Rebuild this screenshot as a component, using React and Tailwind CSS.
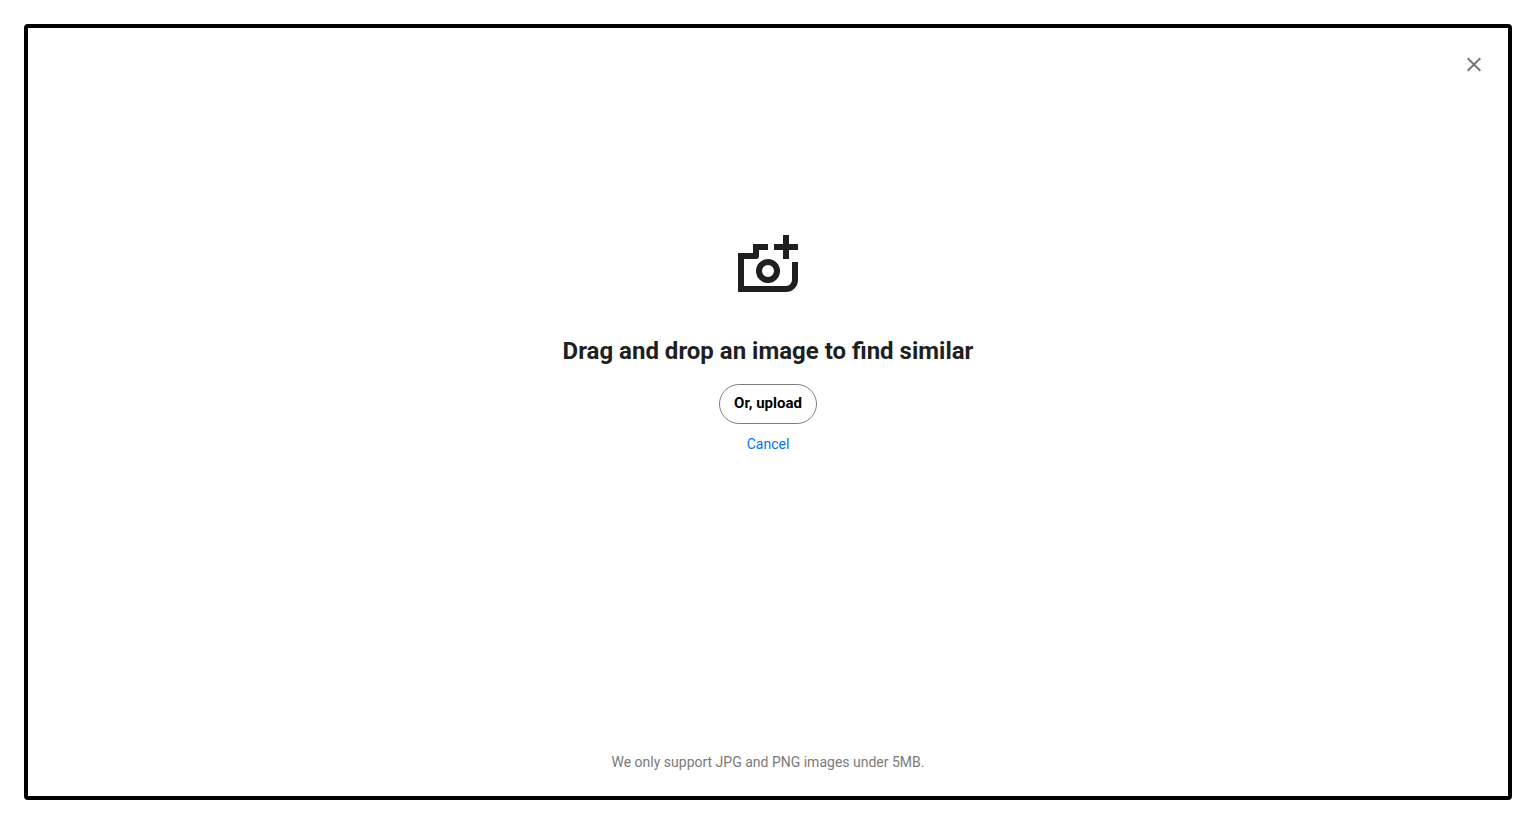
import React from 'react';

function CloseIcon() {
    return (
        <svg className="size-6" viewBox="0 0 24 24" fill="currentColor" aria-hidden="true">
            <path d="M19 6.91 17.59 5.5 12 11.09 6.41 5.5 5 6.91 10.59 12.5 5 18.09 6.41 19.5 12 13.91 17.59 19.5 19 18.09 13.41 12.5z" />
        </svg>
    );
}

function CameraPlusIcon() {
    return (
        <svg width="60" height="57" viewBox="0 0 60 57" fill="currentColor" aria-hidden="true">
            <path d="M0 18H15V9H30V15H21V21a3 3 0 0 1-3 3H6V51H48a6 6 0 0 0 6-6V27h6V45a12 12 0 0 1-12 12H0z" />
            <path d="M45 0h6v9h9v6h-9v9h-6v-9h-9V9h9z" />
            <circle cx="30" cy="36" r="9" fill="none" stroke="currentColor" strokeWidth="6" />
        </svg>
    );
}

export default function App() {
    return (
        <div className="flex min-h-screen bg-white p-6 font-['Roboto',sans-serif]">
            <div className="flex flex-1 flex-col rounded border-4 border-black">
                <header className="flex justify-end pt-6 pr-[22px]">
                    <button type="button" aria-label="Close" className="text-[#757575] cursor-pointer">
                        <CloseIcon />
                    </button>
                </header>

                <main className="flex flex-1 flex-col items-center justify-center pb-[139px] text-[#1f1f1f]">
                    <CameraPlusIcon />
                    <h1 className="mt-[43px] text-2xl font-bold text-center">
                        Drag and drop an image to find similar
                    </h1>
                    <button
                        type="button"
                        className="mt-[17px] h-10 rounded-full border border-[#808080] px-3.5 pb-0.5 text-[15px] font-bold text-black cursor-pointer"
                    >
                        Or, upload
                    </button>
                    <button type="button" className="mt-2.5 text-sm text-[#0073f5] cursor-pointer">
                        Cancel
                    </button>
                </main>

                <footer className="pb-6 text-center text-sm text-[#7a7a7a]">
                    We only support JPG and PNG images under 5MB.
                </footer>
            </div>
        </div>
    );
}
